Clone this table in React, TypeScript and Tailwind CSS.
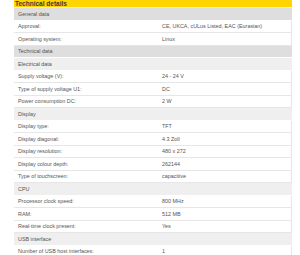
import React from "react";

type Row = { label: string; value?: string; kind: "main" | "sub" | "data" };

const rows: Row[] = [
  { label: "General data", kind: "main" },
  { label: "Approval:", value: "CE, UKCA, cULus Listed, EAC (Eurasian)", kind: "data" },
  { label: "Operating system:", value: "Linux", kind: "data" },
  { label: "Technical data", kind: "main" },
  { label: "Electrical data", kind: "sub" },
  { label: "Supply voltage (V):", value: "24 - 24 V", kind: "data" },
  { label: "Type of supply voltage U1:", value: "DC", kind: "data" },
  { label: "Power consumption DC:", value: "2 W", kind: "data" },
  { label: "Display", kind: "sub" },
  { label: "Display type:", value: "TFT", kind: "data" },
  { label: "Display diagonal:", value: "4.3 Zoll", kind: "data" },
  { label: "Display resolution:", value: "480 x 272", kind: "data" },
  { label: "Display colour depth:", value: "262144", kind: "data" },
  { label: "Type of touchscreen:", value: "capacitive", kind: "data" },
  { label: "CPU", kind: "sub" },
  { label: "Processor clock speed:", value: "800 MHz", kind: "data" },
  { label: "RAM:", value: "512 MB", kind: "data" },
  { label: "Real-time clock present:", value: "Yes", kind: "data" },
  { label: "USB interface", kind: "sub" },
  { label: "Number of USB host interfaces:", value: "1", kind: "data" },
];

const App: React.FC = () => {
  return (
    <div
      className="w-[300px] h-[255px] overflow-hidden bg-white"
      style={{ fontFamily: '"Liberation Sans", Arial, sans-serif' }}
    >
      <div className="ml-[14px] w-[278px]">
        <div className="h-[8px] bg-[#ffd400] border-b border-[#fff3b0] pl-[1px] text-[6.5px] leading-[7px] font-bold text-[#3a3a3a] overflow-hidden">
          Technical details
        </div>
        {rows.map((row, i) =>
          row.kind === "data" ? (
            <div
              key={i}
              className="h-[12.5px] flex items-center bg-white border-b border-r border-[#e6e6e6] text-[5.4px] text-[#555]"
            >
              <div className="w-[148px] pl-[4px]">{row.label}</div>
              <div>{row.value}</div>
            </div>
          ) : (
            <div
              key={i}
              className={`h-[12.5px] flex items-center pl-[4px] text-[5.4px] text-[#555] border-b border-white ${
                row.kind === "main" ? "bg-[#dedede]" : "bg-[#efefef]"
              }`}
            >
              {row.label}
            </div>
          )
        )}
      </div>
    </div>
  );
};

export default App;
